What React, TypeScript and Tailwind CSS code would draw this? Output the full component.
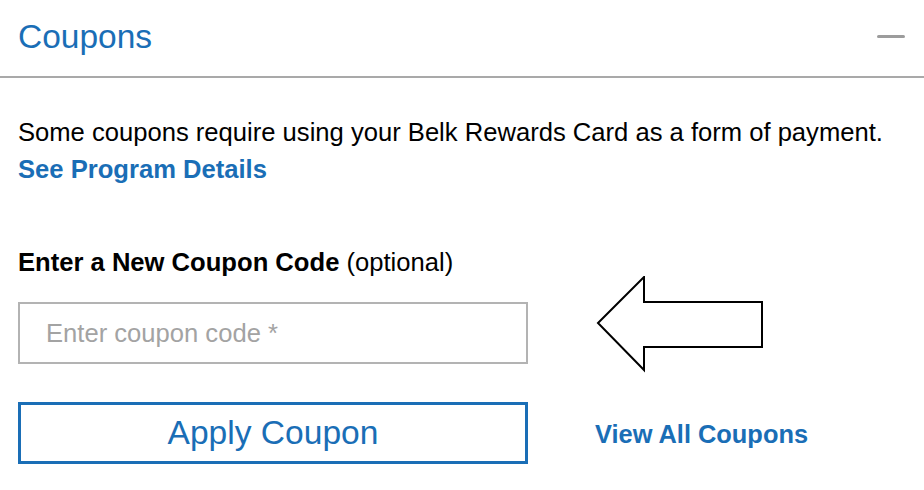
function ArrowDrawing() {
  return (
    <svg width="170" height="98" viewBox="0 0 170 98" className="shrink-0">
      <polygon
        points="2,47 48,1 48,26 166,26 166,71 48,71 48,94"
        fill="white"
        stroke="black"
        strokeWidth="2"
      />
    </svg>
  );
}

export default function App() {
  return (
    <div className="w-[924px] h-[490px] bg-white font-['Liberation_Sans',Arial,sans-serif] text-black overflow-hidden">
      {/* Header */}
      <div className="h-[78px] flex items-center justify-between pl-[18px] pr-[19px] border-b-2 border-[#a9a9a9]">
        <h2 className="text-[33.5px] leading-none text-[#1a6eb6] -mt-[2px]">Coupons</h2>
        <div className="w-[28px] h-[3px] rounded-full bg-[#9c9c9c] -mt-[4px]" aria-label="collapse" />
      </div>

      {/* Body */}
      <div className="px-[18px] pt-[36px]">
        <p className="text-[25.6px] leading-[37px]">
          Some coupons require using your Belk Rewards Card as a form of payment.
          <br />
          <a href="#" className="font-bold text-[#1a6eb6]">See Program Details</a>
        </p>

        <div className="mt-[59px] text-[25.6px] leading-[30px]">
          <span className="font-bold">Enter a New Coupon Code</span> (optional)
        </div>

        <div className="flex items-start mt-[25px]">
          <input
            type="text"
            placeholder="Enter coupon code *"
            className="w-[510px] h-[62px] border-2 border-[#b3b3b3] pl-[26px] text-[25.6px] placeholder:text-[#a3a3a3] outline-none"
          />
          <div className="ml-[68px] -mt-[26px]">
            <ArrowDrawing />
          </div>
        </div>

        <div className="flex items-center mt-[28px]">
          <button className="w-[510px] h-[62px] border-[3px] border-[#1a6eb6] text-[33.6px] text-[#1a6eb6] flex items-center justify-center">
            Apply Coupon
          </button>
          <a href="#" className="ml-[67px] mt-[2px] text-[25.4px] font-bold text-[#1a6eb6]">View All Coupons</a>
        </div>
      </div>
    </div>
  );
}
